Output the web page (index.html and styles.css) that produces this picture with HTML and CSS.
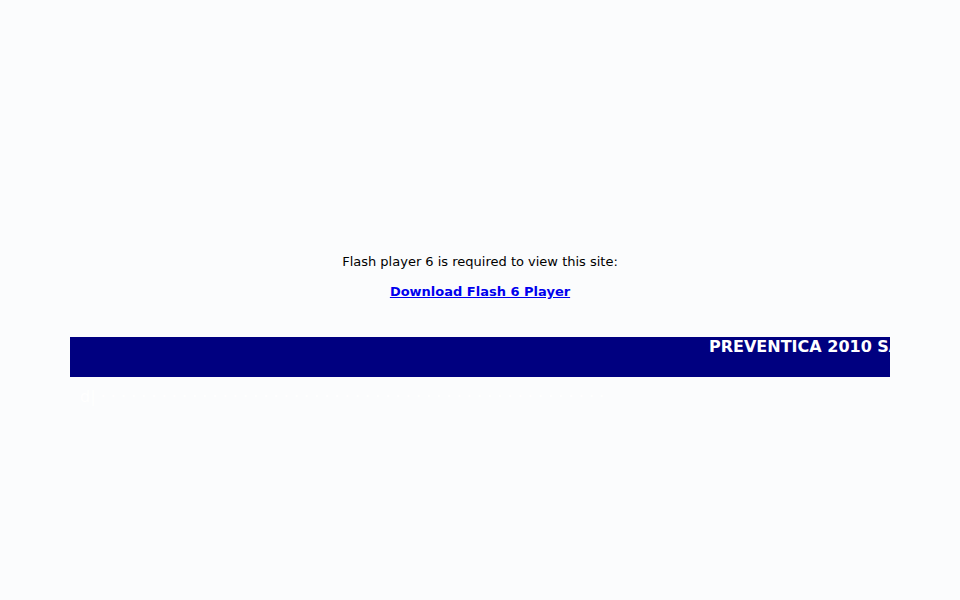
FILE: index.html
```html
<!DOCTYPE html>
<html>
<head>
<meta charset="utf-8">
<title>Preventica</title>
<link rel="stylesheet" href="styles.css">
</head>
<body>
<main class="page">
  <section class="notice">
    <p class="notice-text">Flash player 6 is required to view this site:</p>
    <p class="notice-link"><a href="#">Download Flash 6 Player</a></p>
  </section>
  <div class="ticker">
    <span class="ticker-text">PREVENTICA 2010 SALON NATIONAL DE LA PREVENTION</span>
  </div>
  <div class="dots">d| · · · · · · · · · · · · · · · · · · · · · · · · · · · · · · · · · · · · · · · · · · · · · · · · · ·</div>
</main>
</body>
</html>
```

FILE: styles.css
```css
html, body {
  margin: 0;
  padding: 0;
  background: #fbfcfd;
}
body {
  font-family: "DejaVu Sans", sans-serif;
  color: #000;
}
.page {
  padding-top: 239px;
}
.notice {
  text-align: center;
  font-size: 13px;
}
.notice p {
  margin: 15px 0;
}
.notice-link a {
  color: #0000ee;
  font-weight: bold;
  text-decoration: underline;
}
.ticker {
  margin: 38px 70px 0;
  height: 40px;
  background: #000080;
  overflow: hidden;
  white-space: nowrap;
}
.ticker-text {
  display: inline-block;
  padding-left: 639px;
  color: #fff;
  font-weight: bold;
  font-size: 16px;
}
.dots {
  margin: 10px 70px 0;
  padding-left: 10px;
  color: #ffffff;
  font-size: 16px;
  white-space: nowrap;
  overflow: hidden;
}
```
